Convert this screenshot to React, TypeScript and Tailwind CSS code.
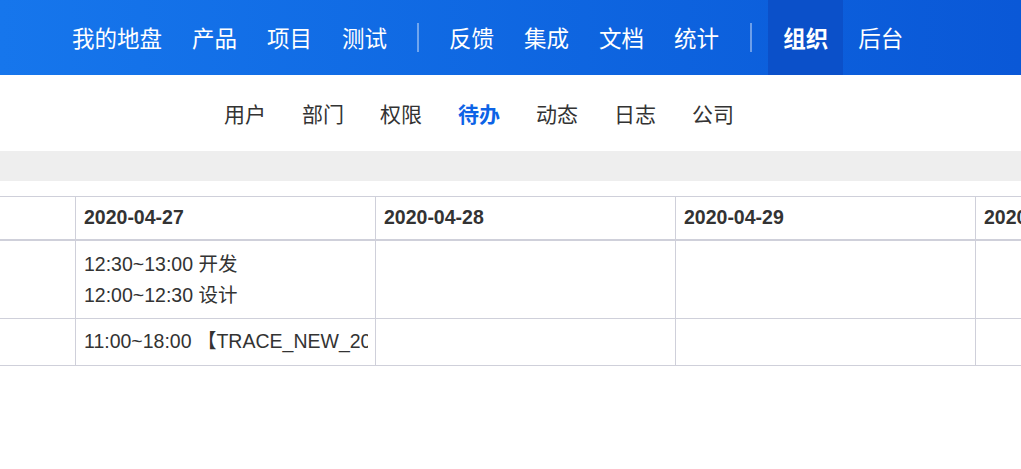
import React from "react";

const mainNav1 = ["我的地盘", "产品", "项目", "测试"];
const mainNav2 = ["反馈", "集成", "文档", "统计"];
const subNav = ["用户", "部门", "权限", "待办", "动态", "日志", "公司"];

function NavItem({ label, active }: { label: string; active?: boolean }) {
  return (
    <div
      className={
        active
          ? "flex h-full items-center bg-[#0b50c9] px-[15px] font-bold text-white"
          : "flex h-full items-center px-[15px] text-white"
      }
    >
      {label}
    </div>
  );
}

export default function App() {
  const font = { fontFamily: '"Noto Sans CJK SC", "Noto Sans", sans-serif' };
  const cellFont = { fontFamily: '"Liberation Sans", Arial, "Noto Sans CJK SC", sans-serif' };
  return (
    <div className="min-h-[469px] w-[1021px] overflow-hidden bg-white" style={font}>
      {/* top nav */}
      <div className="flex h-[75px] items-center bg-gradient-to-r from-[#1676ec] to-[#0a58d7] pl-[57px] text-[22.5px] leading-none">
        {mainNav1.map((l) => (
          <NavItem key={l} label={l} />
        ))}
        <div className="mx-[15px] h-[29px] w-[2px] bg-white/40" />
        {mainNav2.map((l) => (
          <NavItem key={l} label={l} />
        ))}
        <div className="mx-[16px] h-[29px] w-[2px] bg-white/40" />
        <NavItem label="组织" active />
        <NavItem label="后台" />
      </div>

      {/* sub nav */}
      <div className="flex h-[76px] items-center gap-[36px] pl-[224px] text-[21px] leading-none text-[#333]">
        {subNav.map((l) => (
          <div key={l} className={l === "待办" ? "font-bold text-[#0d63e6]" : ""}>
            {l}
          </div>
        ))}
      </div>

      {/* gray bar */}
      <div className="h-[30px] bg-[#eeeeee]" />

      {/* table */}
      <div className="mt-[15px] overflow-hidden text-[19.5px] text-[#333]" style={cellFont}>
        <div className="flex w-[1400px] border-t border-[#cfd0da]">
          <div className="h-[42px] w-[75px] shrink-0" />
          {["2020-04-27", "2020-04-28", "2020-04-29", "2020-04-30"].map((d) => (
            <div
              key={d}
              className="flex h-[42px] w-[300px] shrink-0 items-center border-l border-[#cfd0da] px-2 font-bold"
            >
              {d}
            </div>
          ))}
        </div>
        <div className="flex w-[1400px] border-t-2 border-[#cfd0da]">
          <div className="h-[77px] w-[75px] shrink-0" />
          <div className="flex h-[77px] w-[300px] shrink-0 flex-col justify-center border-l border-[#cfd0da] px-2 leading-[31px]">
            <div>12:30~13:00 开发</div>
            <div>12:00~12:30 设计</div>
          </div>
          <div className="w-[300px] shrink-0 border-l border-[#cfd0da]" />
          <div className="w-[300px] shrink-0 border-l border-[#cfd0da]" />
          <div className="w-[300px] shrink-0 border-l border-[#cfd0da]" />
        </div>
        <div className="flex w-[1400px] border-y border-[#cfd0da]">
          <div className="h-[46px] w-[75px] shrink-0" />
          <div className="flex h-[46px] w-[300px] shrink-0 items-center overflow-hidden whitespace-nowrap border-l border-[#cfd0da] pl-2 pr-[7px]">
            <div className="overflow-hidden">11:00~18:00 【TRACE_NEW_20200427】开发任务</div>
          </div>
          <div className="w-[300px] shrink-0 border-l border-[#cfd0da]" />
          <div className="w-[300px] shrink-0 border-l border-[#cfd0da]" />
          <div className="w-[300px] shrink-0 border-l border-[#cfd0da]" />
        </div>
      </div>
    </div>
  );
}
